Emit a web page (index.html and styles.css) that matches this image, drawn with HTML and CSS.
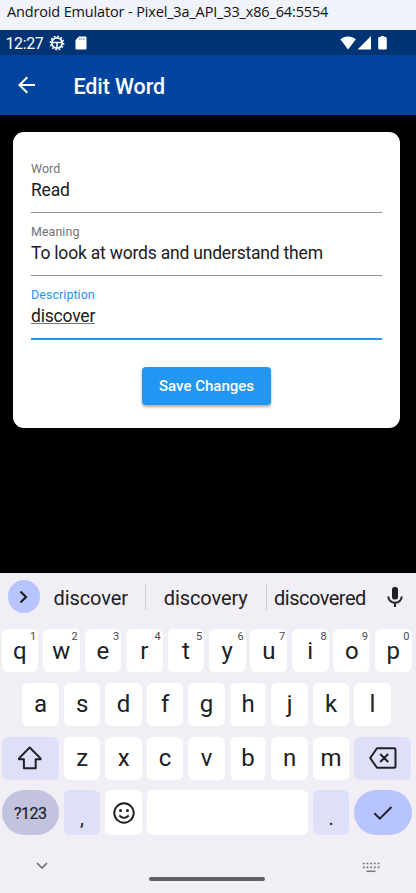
FILE: index.html
```html
<!DOCTYPE html>
<html lang="en">
<head>
<meta charset="utf-8">
<title>Edit Word</title>
<link rel="stylesheet" href="styles.css">
</head>
<body>
<div class="window-title"><span>Android Emulator - Pixel_3a_API_33_x86_64:5554</span></div>
<div class="status">
  <span class="time">12:27</span>
  <svg class="gear" width="16" height="16" viewBox="0 0 16 16" fill="none" stroke="#fff"><circle cx="8" cy="8" r="5.2" stroke-width="1.8"/><circle cx="8" cy="8" r="6.7" stroke-width="1.4" stroke-dasharray="1.8 1.708"/><path d="M3 7.500h10M8 8v5" stroke-width="1.500"/></svg>
  <svg class="sd" width="12" height="14" viewBox="0 0 12 14"><path d="M4 .4h6.2q1.3 0 1.3 1.3v10.6q0 1.3-1.3 1.3H1.8q-1.3 0-1.3-1.3V4z" fill="#fff"/><path d="M4.8 2v2M6.8 2v2M8.8 2v2" stroke="#7d95b8"/></svg>
  <svg class="signals" width="48" height="16" viewBox="0 0 48 16" fill="#fff"><path d="M.3 4.300C4.500.4 11.700.4 15.900 4.300L8.100 14.500zM31 1v13.500H17.500zM38.200 3.300q0-1.200 1.200-1.200h1.400V1h3.500v1.100h1.300q1.200 0 1.200 1.200v10q0 1.200-1.200 1.200h-6.200q-1.200 0-1.200-1.200z"/></svg>
</div>
<header class="appbar">
  <svg width="18" height="18" viewBox="0 0 18 18" fill="none" stroke="#fff" stroke-width="2"><path d="M17 9H2M9.300 1.200 1.500 9l7.800 7.800"/></svg>
  <h1>Edit Word</h1>
</header>
<main>
  <form class="card">
    <div class="field"><label>Word</label><div class="value"><span>Read</span></div></div>
    <div class="field second"><label>Meaning</label><div class="value"><span>To look at words and understand them</span></div></div>
    <div class="field active"><label>Description</label><div class="value"><span>discover</span></div></div>
    <button type="button">Save Changes</button>
  </form>
</main>
<section class="keyboard">
  <div class="suggestions">
    <span class="expand"><svg width="10" height="14" viewBox="0 0 10 14" fill="none" stroke="#1c1c20" stroke-width="2.200"><path d="m1.500 1.500 5.500 5.500-5.500 5.500"/></svg></span>
    <span class="word s1">discover</span><i></i><span class="word s2">discovery</span><i></i><span class="word s3">discovered</span>
    <svg class="mic" width="16" height="22" viewBox="0 0 16 22"><rect x="5" y="1" width="6" height="12.500" rx="2.500" fill="#202024"/><path d="M1.300 10.500a6.700 6.300 0 0 0 13.400 0M8 17v4" fill="none" stroke="#202024" stroke-width="2"/></svg>
  </div>
  <div class="row r1">
    <b>q<sup>1</sup></b><b>w<sup>2</sup></b><b>e<sup>3</sup></b><b>r<sup>4</sup></b><b>t<sup>5</sup></b><b>y<sup>6</sup></b><b>u<sup>7</sup></b><b>i<sup>8</sup></b><b>o<sup>9</sup></b><b>p<sup>0</sup></b>
  </div>
  <div class="row r2"><b>a</b><b>s</b><b>d</b><b>f</b><b>g</b><b>h</b><b>j</b><b>k</b><b>l</b></div>
  <div class="row r3">
    <b class="wide"><svg width="26" height="24" viewBox="0 0 26 24" fill="none" stroke="#202024" stroke-width="2" stroke-linejoin="round"><path d="M12.700 1.500 23.600 12.400v.8h-4.900v9H6.900v-9H2v-.8z"/></svg></b>
    <b>z</b><b>x</b><b>c</b><b>v</b><b>b</b><b>n</b><b>m</b>
    <b class="wide"><svg width="28" height="22" viewBox="0 0 28 22" fill="none" stroke="#202024" stroke-width="2" stroke-linejoin="round"><path d="M8 1.200h17q1.500 0 1.500 1.500v16.600q0 1.500-1.500 1.500H8L1.200 11zM11.200 7l8 8M19.200 7l-8 8"/></svg></b>
  </div>
  <div class="row r4">
    <b class="wide pill mode">?123</b><b class="tint punct">,</b>
    <b><svg width="22" height="22" viewBox="0 0 22 22" fill="none" stroke="#202024" stroke-width="2"><circle cx="11" cy="11" r="9.700"/><path d="M6.300 13.500q4.700 4.700 9.400 0" stroke-width="1.800"/><circle cx="7.500" cy="8.500" r="1.500" fill="#202024" stroke="none"/><circle cx="14.500" cy="8.500" r="1.500" fill="#202024" stroke="none"/></svg></b>
    <b class="space"></b><b class="tint punct">.</b>
    <b class="wide pill enter"><svg width="20" height="16" viewBox="0 0 20 16" fill="none" stroke="#202024" stroke-width="2"><path d="m1.500 8.300 5.300 5.400L18.500 2"/></svg></b>
  </div>
  <div class="nav">
    <svg width="12" height="8" viewBox="0 0 12 8" fill="none" stroke="#66656a" stroke-width="1.500"><path d="m1 1 5 5 5-5"/></svg>
    <span class="handle"></span>
    <svg width="18" height="11" viewBox="0 0 18 11" fill="none" stroke="#77767b" stroke-width="1.700"><path d="M.8 1.500h17M.8 5.300h17" stroke-dasharray="1.900 1.800"/><path d="M4.500 9.300h9" stroke-width="1.500"/></svg>
  </div>
</section>
</body>
</html>
```
FILE: styles.css
```css
* { box-sizing: border-box; }
body { margin: 0; width: 416px; height: 893px; background: #000; font-family: Roboto, sans-serif; color: #202020; overflow: hidden; display: flex; flex-direction: column; }
svg { display: block; flex: none; }
.window-title { height: 30px; flex: none; background: #f0f3fa; color: #111; font: 14.5px/24px "Open Sans", sans-serif; padding-left: 7px; white-space: nowrap; letter-spacing: -.15px; }
.status { height: 25px; flex: none; background: #003373; display: flex; align-items: center; padding: 0 28px 0 5.500px; color: #fff; }
.time { font-size: 16px; width: 43.500px; white-space: nowrap; letter-spacing: -.4px; padding-top: 1px; }
.sd { margin-left: 10px; }
.signals { margin-left: auto; }
.appbar { height: 60px; flex: none; background: #00449f; display: flex; align-items: center; padding-left: 18px; gap: 37.500px; color: #fff; }
h1 { margin: 0; font-size: 21.5px; font-weight: 500; line-height: 30px; letter-spacing: -.1px; padding-top: 3px; }
main { height: 458px; flex: none; padding: 17px 16.300px 0 13.300px; }
.card { height: 296.300px; background: #fff; border-radius: 11px; padding: 28px 17.700px 0; }
.field { height: 53px; border-bottom: 1px solid #929292; margin-bottom: 10px; }
.field label { display: block; font-size: 12.4px; line-height: 18px; color: #737373; letter-spacing: .1px; }
.value { font-size: 17.5px; line-height: 24px; letter-spacing: -.2px; }
.second { margin-bottom: 10px; }
.field.active { height: 54px; border-bottom: 2px solid #2196f3; }
.active label { color: #2196f3; }
.active span { display: inline-block; height: 20px; line-height: 24px; border-bottom: 1px solid #777; }
button { display: block; width: 129px; height: 38.500px; margin: 26.700px auto 0; border: 0; border-radius: 4px; background: #2196f3; color: #fff; font: 500 15px/39px Roboto, sans-serif; padding: 0; box-shadow: 0 2px 3px #0005; white-space: nowrap; }
.keyboard { height: 320px; flex: none; background: #f1eff5; color: #202024; }
.suggestions { height: 56px; display: flex; align-items: center; padding: 0 13px 9px 7.500px; font-size: 20px; letter-spacing: -.1px; white-space: nowrap; }
.word { padding-top: 3px; }
.expand { width: 32.500px; height: 32.500px; border-radius: 50%; background: #b8c4ff; display: grid; place-items: center; margin-right: 13.500px; }
.suggestions i { width: 1px; height: 26px; background: #ccccd2; }
.s1 { width: 91px; }
.s2 { width: 120.500px; text-align: center; }
.s3 { padding-left: 7px; letter-spacing: -.5px; }
.mic { margin-left: auto; }
.row { display: flex; gap: 4.900px; justify-content: center; height: 43.300px; margin-bottom: 10.500px; padding-right: 2.900px; }
.row b { position: relative; width: 36.600px; flex: none; background: #fff; border-radius: 6px; display: flex; align-items: center; justify-content: center; font-size: 24px; font-weight: 400; line-height: 40px; padding-bottom: 0; }
.row sup { position: absolute; right: 2px; top: 2px; font-size: 11px; line-height: 12px; color: #4a4a4e; }
.row .wide { width: 57.300px; }
.row .tint, .row .wide { background: #dee0fa; }
.r4 { height: 45px; }
.row .pill { border-radius: 22.500px; }
.row .mode { background: #c2c3de; font-size: 16px; letter-spacing: -.5px; padding-top: 2px; -webkit-text-stroke: .2px; }
.row .enter { background: #b8c4ff; }
.row .space { width: 161.100px; }
.row .punct { padding-top: 11px; font-size: 20px; }
.nav { height: 36px; padding: 16px 36px 0; display: flex; justify-content: space-between; }
.handle { width: 116px; height: 4px; border-radius: 2px; background: #605f62; margin: 15.500px 0 0 4px; }
```
